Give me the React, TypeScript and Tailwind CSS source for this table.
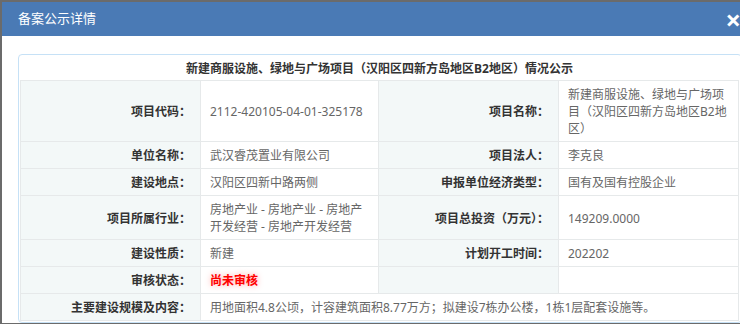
const rows: { a: string; av: React.ReactNode; b?: string; bv?: string }[] = [
  {
    a: "项目代码：",
    av: "2112-420105-04-01-325178",
    b: "项目名称：",
    bv: "新建商服设施、绿地与广场项目（汉阳区四新方岛地区B2地区）",
  },
  { a: "单位名称：", av: "武汉睿茂置业有限公司", b: "项目法人：", bv: "李克良" },
  { a: "建设地点：", av: "汉阳区四新中路两侧", b: "申报单位经济类型：", bv: "国有及国有控股企业" },
  {
    a: "项目所属行业：",
    av: "房地产业 - 房地产业 - 房地产开发经营 - 房地产开发经营",
    b: "项目总投资（万元）：",
    bv: "149209.0000",
  },
  { a: "建设性质：", av: "新建", b: "计划开工时间：", bv: "202202" },
  {
    a: "审核状态：",
    av: (
      <span className="font-bold text-[#ff0000] [text-shadow:0_0_6px_rgba(255,0,0,0.35)]">
        尚未审核
      </span>
    ),
    b: "",
    bv: "",
  },
];

const label =
  "border border-[#e6e9ea] bg-[#f3f8f8] px-[9px] pt-[5px] pb-[4px] text-right align-middle font-bold text-[#333]";
const value =
  "border border-[#e6e9ea] bg-white px-[9px] pt-[5px] pb-[4px] text-left align-middle text-[#666]";

export default function App() {
  return (
    <div
      className="h-[324px] w-[740px] overflow-hidden bg-[#6b6b6b] pl-[2px] pt-[2px]"
      style={{ fontFamily: '"Noto Sans", "Noto Sans CJK SC", sans-serif' }}
    >
      <div className="w-[756px] bg-white">
        <div className="flex h-[34px] items-center justify-between bg-[#4a7ab5] pl-[16px] pr-[17px]">
          <h2 className="text-[13px] text-white">备案公示详情</h2>
          <span className="text-[27px] font-bold leading-none text-white">×</span>
        </div>
        <div className="px-[16px] pt-[18px]">
          <div className="rounded-[4px] border border-[#c6e1f6] p-px">
            <table className="w-[718px] table-fixed border-collapse text-[12px] leading-[17px]">
              <colgroup>
                <col className="w-[180px]" />
                <col className="w-[178px]" />
                <col className="w-[180px]" />
                <col className="w-[180px]" />
              </colgroup>
              <tbody>
                <tr>
                  <td
                    colSpan={4}
                    className="border-b border-[#e6e9ea] pt-[4px] pb-[3px] text-center text-[12px] font-bold text-[#333]"
                  >
                    新建商服设施、绿地与广场项目（汉阳区四新方岛地区B2地区）情况公示
                  </td>
                </tr>
                {rows.map((r, i) => (
                  <tr key={i}>
                    <td className={label}>{r.a}</td>
                    <td className={value}>{r.av}</td>
                    <td className={label}>{r.b}</td>
                    <td className={value}>{r.bv}</td>
                  </tr>
                ))}
                <tr>
                  <td className={label}>主要建设规模及内容：</td>
                  <td colSpan={3} className={value}>
                    用地面积4.8公顷，计容建筑面积8.77万方；拟建设7栋办公楼，1栋1层配套设施等。
                  </td>
                </tr>
              </tbody>
            </table>
          </div>
        </div>
      </div>
    </div>
  );
}
